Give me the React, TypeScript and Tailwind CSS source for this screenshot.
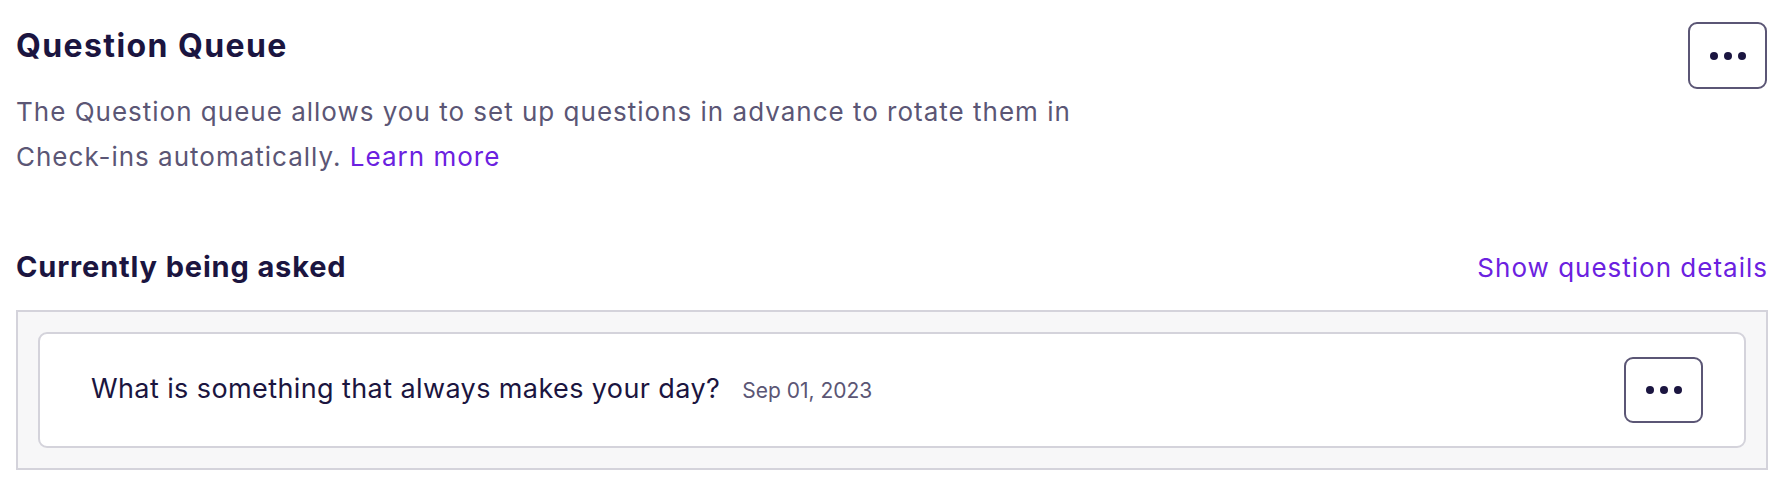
import type { ReactNode } from "react";

function MoreButton({ className = "" }: { className?: string }) {
  return (
    <button
      type="button"
      className={`flex w-[79px] shrink-0 items-center justify-center gap-[6px] rounded-[9px] border-2 border-[#5b5675] bg-white ${className}`}
    >
      <span className="h-[8px] w-[8px] rounded-full bg-[#1b1540]" />
      <span className="h-[8px] w-[8px] rounded-full bg-[#1b1540]" />
      <span className="h-[8px] w-[8px] rounded-full bg-[#1b1540]" />
    </button>
  );
}

function QuestionRow({ text, date }: { text: string; date: string }) {
  return (
    <div className="flex items-center justify-between rounded-[9px] border-2 border-[#d4d3db] bg-white py-[23px] pl-[51px] pr-[41px]">
      <div className="flex items-baseline gap-[22px] leading-[36px]">
        <span className="text-[27px] tracking-[0.4px] text-[#1b1540]">{text}</span>
        <span className="text-[21px] text-[#5b5675]">{date}</span>
      </div>
      <MoreButton className="h-[66px]" />
    </div>
  );
}

function Section({ title, action, children }: { title: string; action: ReactNode; children: ReactNode }) {
  return (
    <section className="mt-[70px]">
      <div className="flex items-baseline justify-between">
        <h2 className="text-[29px] font-bold leading-[36px] tracking-[0.85px] text-[#1b1540]">{title}</h2>
        {action}
      </div>
      <div className="mt-[24px] border-2 border-[#d4d3db] bg-[#f7f7f8] p-[20px]">{children}</div>
    </section>
  );
}

export default function App() {
  return (
    <div className="min-h-screen bg-white pl-4 pr-6 pt-[22px] font-['Inter',sans-serif]">
      <div className="flex items-start justify-between">
        <div>
          <h1 className="mt-[4px] text-[32px] font-bold leading-[40px] tracking-[1.4px] text-[#1b1540]">
            Question Queue
          </h1>
          <p className="mt-[23px] max-w-[1080px] text-[26px] leading-[45px] tracking-[1px] text-[#5b5675]">
            The Question queue allows you to set up questions in advance to rotate them in Check-ins
            automatically.{" "}
            <a href="#" className="text-[#6b21e0]">
              Learn more
            </a>
          </p>
        </div>
        <MoreButton className="mr-px h-[67px]" />
      </div>

      <Section
        title="Currently being asked"
        action={
          <a href="#" className="text-[26px] leading-[36px] tracking-[1px] text-[#6b21e0]">
            Show question details
          </a>
        }
      >
        <QuestionRow text="What is something that always makes your day?" date="Sep 01, 2023" />
      </Section>
    </div>
  );
}
